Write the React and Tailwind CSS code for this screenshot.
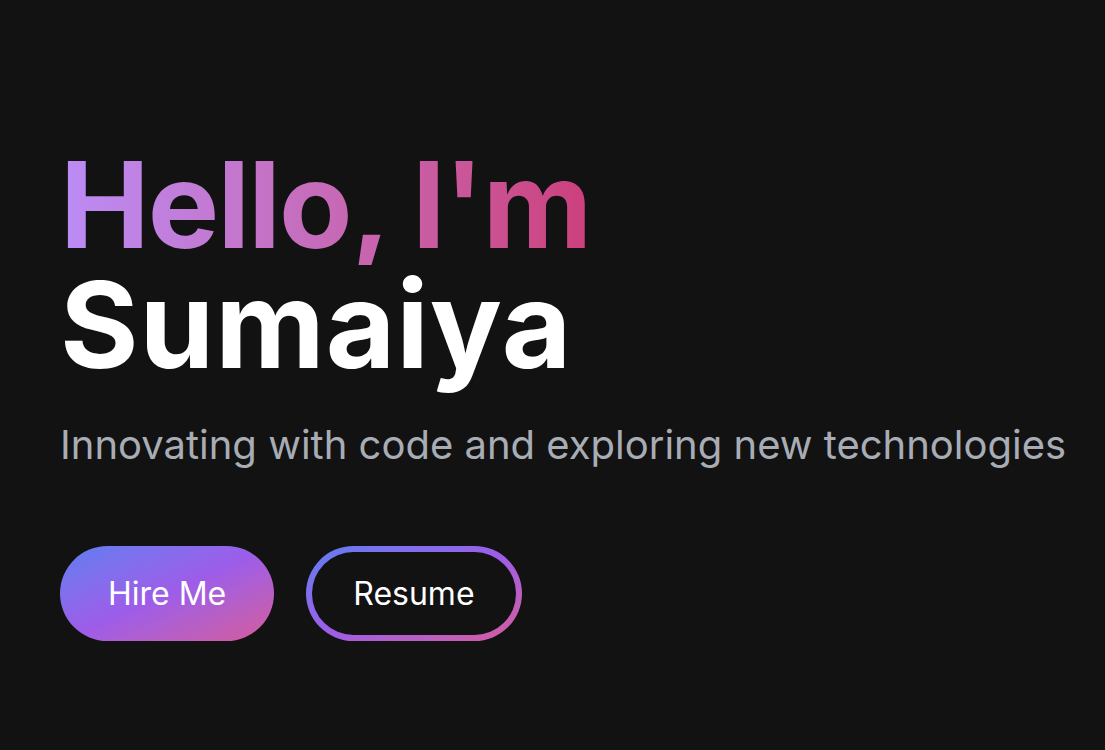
export default function App() {
  return (
    <div
      className="min-h-[750px] w-full bg-[#121212] pl-[60px] pt-[145px]"
      style={{ fontFamily: "Inter, 'Noto Sans', sans-serif" }}
    >
      <h1 className="flex flex-col items-start text-[120px] leading-none font-bold">
        <span className="block bg-linear-to-r from-[#bb8cf6] to-[#cc3f7c] bg-clip-text tracking-[-0.015em] text-transparent">
          Hello, I'm
        </span>
        <span className="block tracking-[0.008em] text-white">Sumaiya</span>
      </h1>
      <p className="mt-[30px] text-[40px] leading-[60px] text-[#a8adb5]">
        Innovating with code and exploring new technologies
      </p>
      <div className="mt-[71px] flex gap-8">
        <button className="rounded-full bg-linear-to-br from-[#5a7ef0] via-[#9d5ce9] to-[#d65a9a] px-12 py-[23.5px] text-[32px] leading-[48px] text-white">
          Hire Me
        </button>
        <div className="rounded-full bg-linear-to-br from-[#5a7ef0] via-[#9d5ce9] to-[#d65a9a] p-[6px]">
          <button className="rounded-full bg-[#121212] px-[41px] py-[17.5px] text-[32px] leading-[48px] text-white">
            Resume
          </button>
        </div>
      </div>
    </div>
  );
}
